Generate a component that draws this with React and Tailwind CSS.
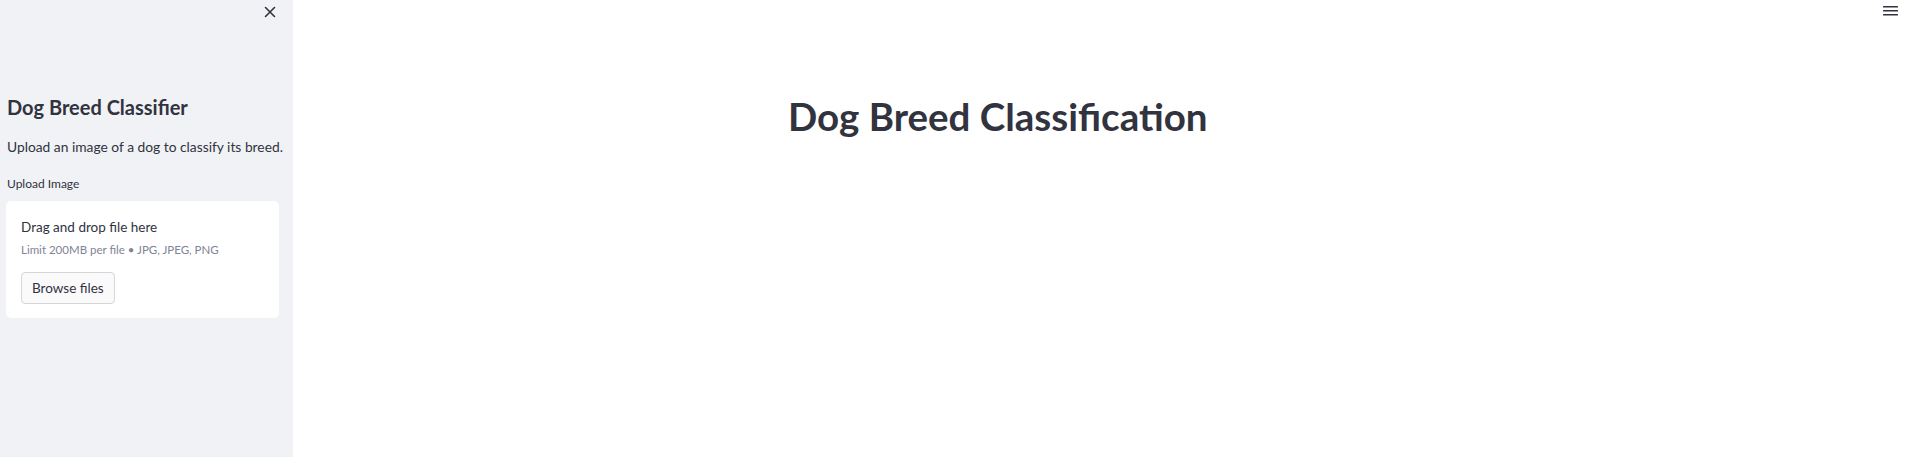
import React from 'react';

function CloseIcon() {
  return (
    <svg width="12" height="12" viewBox="0 0 12 12" fill="none" stroke="#31333f" strokeWidth="1.6" strokeLinecap="round">
      <path d="M1.5 1.5 L10.5 10.5 M10.5 1.5 L1.5 10.5" />
    </svg>
  );
}

function MenuIcon() {
  return (
    <svg width="16" height="12" viewBox="0 0 16 12" fill="#31333f">
      <rect x="0" y="1" width="15" height="1.6" rx="0.5" />
      <rect x="0" y="5" width="15" height="1.6" rx="0.5" />
      <rect x="0" y="9" width="15" height="1.6" rx="0.5" />
    </svg>
  );
}

function Sidebar() {
  return (
    <aside className="w-[293px] shrink-0 bg-[#f0f2f6] h-full flex flex-col pl-[6px] pr-[14px]">
      <div className="flex justify-end h-[24px] items-center pr-[3px]">
        <button className="p-0">
          <CloseIcon />
        </button>
      </div>
      <h2 className="mt-[69px] text-[20px] font-bold leading-[28px] text-[#31333f] pl-[1px]">Dog Breed Classifier</h2>
      <p className="mt-[15px] text-[13.8px] leading-[22px] text-[#31333f] pl-[1px] whitespace-nowrap">
        Upload an image of a dog to classify its breed.
      </p>
      <label className="mt-[17px] text-[12px] leading-[18px] text-[#31333f] pl-[1px]">Upload Image</label>
      <div className="mt-[8px] bg-white rounded-[5px] h-[117px] px-[15px] pt-[16px]">
        <div className="text-[13.5px] leading-[20px] text-[#31333f]">Drag and drop file here</div>
        <div className="mt-[5px] text-[11.5px] leading-[16px] text-[#808495]">Limit 200MB per file • JPG, JPEG, PNG</div>
        <button className="mt-[14px] h-[32px] px-[10px] rounded-[4px] border border-[#d6d6d9] bg-[#fafafb] text-[13.5px] text-[#31333f]">
          Browse files
        </button>
      </div>
    </aside>
  );
}

export default function App() {
  return (
    <div className="flex w-full h-[457px] bg-white overflow-hidden" style={{ fontFamily: 'Lato, "Noto Sans", sans-serif' }}>
      <Sidebar />
      <main className="flex-1 flex flex-col">
        <div className="flex justify-end pr-[13px] pt-[5px] h-[24px]">
          <MenuIcon />
        </div>
        <h1 className="mt-[70px] pl-[495px] text-[38.5px] font-bold leading-[44px] text-[#31333f]">Dog Breed Classification</h1>
      </main>
    </div>
  );
}
